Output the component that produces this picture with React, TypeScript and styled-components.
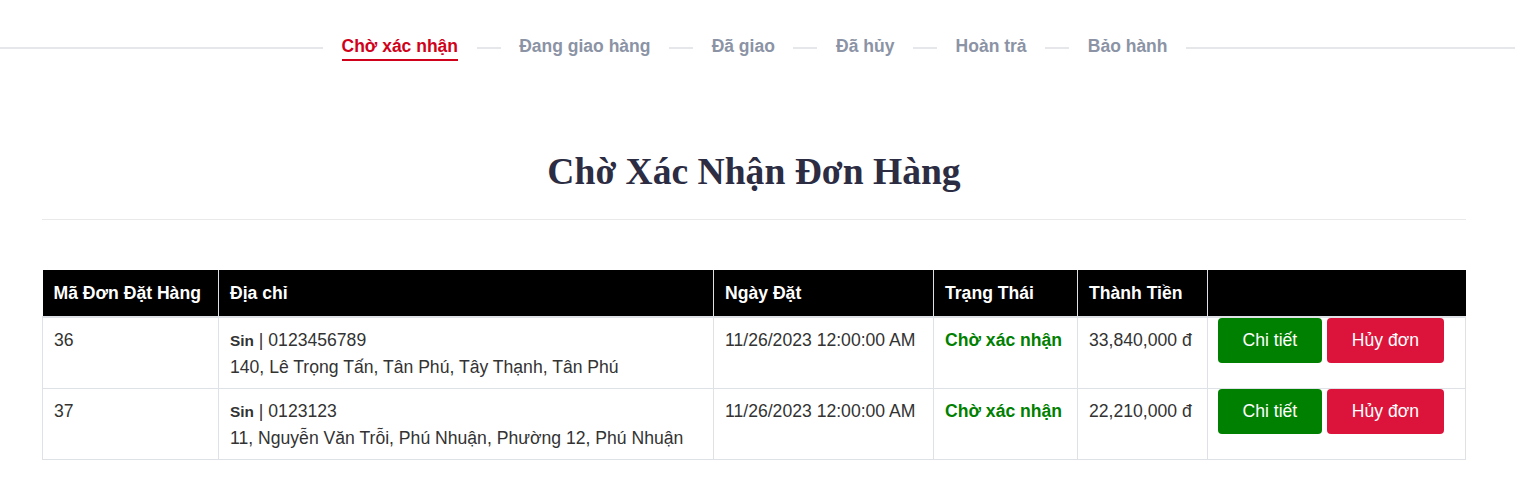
import React from "react";
import styled, { createGlobalStyle } from "styled-components";

const GlobalStyle = createGlobalStyle`
  html, body { margin: 0; padding: 0; background: #fff; }
  body { font-family: "Liberation Sans", Arial, sans-serif; color: #333; }
  * { box-sizing: border-box; }
`;

const Nav = styled.nav`
  display: flex;
  align-items: center;
  padding-top: 34px;
`;

const Line = styled.div<{ $grow?: number }>`
  flex: 1;
  height: 2px;
  background: #e5e7eb;
`;

const RightLine = styled(Line)`
  flex: 1 0 6px;
`;

const Sep = styled.div`
  width: 24px;
  height: 2px;
  background: #e5e7eb;
`;

const Tab = styled.a<{ $active?: boolean }>`
  margin: 0 18.6px;
  font-size: 17.5px;
  font-weight: 700;
  line-height: 24px;
  padding-bottom: 1px;
  border-bottom: 2px solid ${(p) => (p.$active ? "#d0021b" : "transparent")};
  color: ${(p) => (p.$active ? "#d0021b" : "#8b93a5")};
  text-decoration: none;
  cursor: pointer;
  white-space: nowrap;
`;

const Main = styled.main`
  padding: 0 49px 0 42px;
`;

const Title = styled.h1`
  margin: 87px 0 0;
  text-align: center;
  font-family: "Liberation Serif", "Times New Roman", serif;
  font-weight: 700;
  font-size: 37.6px;
  line-height: 48px;
  color: #2c2c43;
`;

const Rule = styled.hr`
  margin: 23px 0 0;
  border: 0;
  border-top: 1px solid #e9e9e9;
`;

const Table = styled.table`
  margin-top: 50px;
  width: 100%;
  border-collapse: collapse;
  table-layout: fixed;
  font-size: 17.6px;
`;

const Th = styled.th<{ $w?: number }>`
  width: ${(p) => (p.$w ? `${p.$w}px` : "auto")};
  background: #000;
  color: #fff;
  text-align: left;
  font-weight: 700;
  line-height: 26px;
  padding: 10px 11px;
  border: 1px solid #dee2e6;
  border-top: 0;
  border-bottom: 2px solid #dee2e6;
  &:first-child { border-left: 0; }
  &:last-child { border-right: 0; }
`;

const Td = styled.td<{ $actions?: boolean }>`
  vertical-align: top;
  line-height: 26.4px;
  padding: ${(p) => (p.$actions ? "0 10px" : "9px 11px 7px")};
  border: 1px solid #dee2e6;
  color: #333;
`;

const Status = styled.span`
  color: #008000;
  font-weight: 700;
`;

const Name = styled.b`
  font-size: 15.4px;
`;

const Actions = styled.div`
  display: flex;
  gap: 5px;
`;

const Btn = styled.button<{ $variant: "green" | "red" }>`
  height: 45px;
  padding: 0 ${(p) => (p.$variant === "green" ? "24.5px" : "25px")};
  border: 0;
  border-radius: 4px;
  font-family: "Liberation Sans", Arial, sans-serif;
  font-size: 17.6px;
  color: #fff;
  background: ${(p) => (p.$variant === "green" ? "#008000" : "#dc143c")};
  cursor: pointer;
`;

const tabs = ["Chờ xác nhận", "Đang giao hàng", "Đã giao", "Đã hủy", "Hoàn trả", "Bảo hành"];

const orders = [
  {
    id: 36,
    phone: "0123456789",
    address: "140, Lê Trọng Tấn, Tân Phú, Tây Thạnh, Tân Phú",
    total: "33,840,000 đ",
  },
  {
    id: 37,
    phone: "0123123",
    address: "11, Nguyễn Văn Trỗi, Phú Nhuận, Phường 12, Phú Nhuận",
    total: "22,210,000 đ",
  },
];

export default function App() {
  return (
    <>
      <GlobalStyle />
      <Nav>
        <Line />
        {tabs.map((t, i) => (
          <React.Fragment key={t}>
            {i > 0 && <Sep />}
            <Tab $active={i === 0}>{t}</Tab>
          </React.Fragment>
        ))}
        <RightLine />
      </Nav>
      <Main>
        <Title>Chờ Xác Nhận Đơn Hàng</Title>
        <Rule />
        <Table>
          <thead>
            <tr>
              <Th $w={176}>Mã Đơn Đặt Hàng</Th>
              <Th $w={495}>Địa chỉ</Th>
              <Th $w={220}>Ngày Đặt</Th>
              <Th $w={144}>Trạng Thái</Th>
              <Th $w={130}>Thành Tiền</Th>
              <Th></Th>
            </tr>
          </thead>
          <tbody>
            {orders.map((o) => (
              <tr key={o.id}>
                <Td>{o.id}</Td>
                <Td>
                  <Name>Sin</Name> | {o.phone}
                  <br />
                  {o.address}
                </Td>
                <Td>11/26/2023 12:00:00 AM</Td>
                <Td>
                  <Status>Chờ xác nhận</Status>
                </Td>
                <Td>{o.total}</Td>
                <Td $actions>
                  <Actions>
                    <Btn $variant="green">Chi tiết</Btn>
                    <Btn $variant="red">Hủy đơn</Btn>
                  </Actions>
                </Td>
              </tr>
            ))}
          </tbody>
        </Table>
      </Main>
    </>
  );
}
